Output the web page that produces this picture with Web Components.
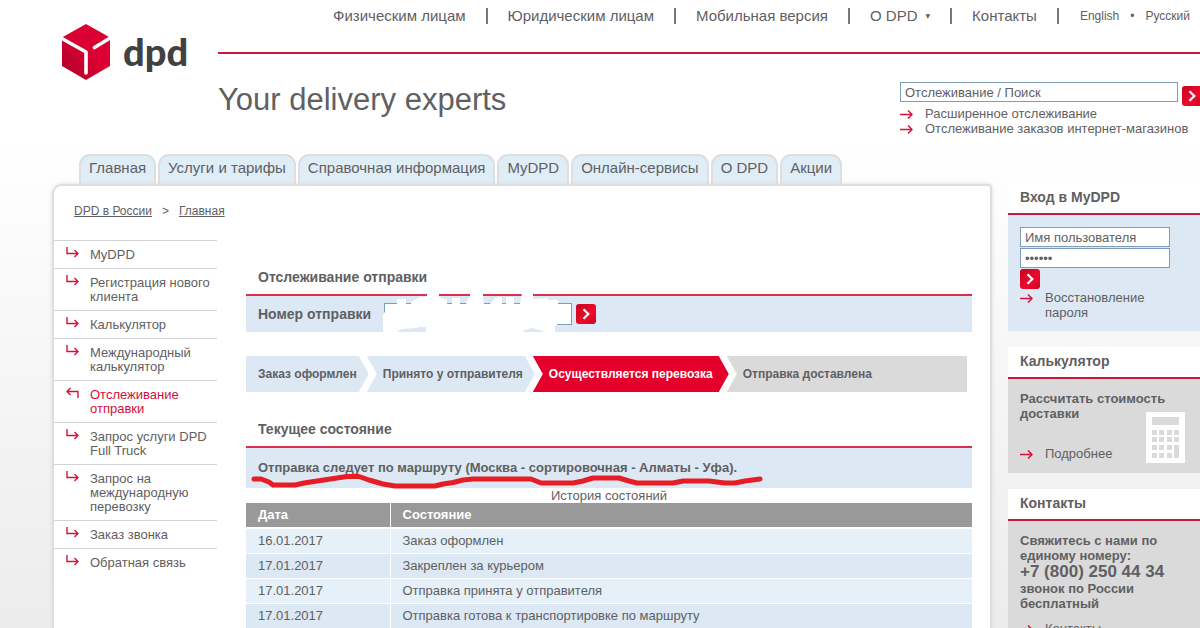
<!DOCTYPE html>
<html lang="ru">
<head>
<meta charset="utf-8">
<meta name="viewport" content="width=device-width, initial-scale=1">
<title>DPD в России</title>
<style>
body { margin: 0; font-family: "Liberation Sans", Arial, sans-serif; font-size: 13px; line-height: 15px; color: #5f6062;
  --red: #c8193c; --blue: #dce8f4; --grey: #dadada; }
</style>
</head>
<body>
<dpd-page></dpd-page>

<script>
const define = (name, html) => {
  const tpl = document.createElement('template');
  tpl.innerHTML = `<style>:host{display:block}*{box-sizing:border-box}a{color:inherit;text-decoration:none}</style>` + html;
  customElements.define(name, class extends HTMLElement {
    constructor() {
      super();
      this.attachShadow({ mode: 'open' }).append(tpl.content.cloneNode(true));
    }
  });
};

/* Red square submit button */
define('dpd-go', `
<style>
:host{flex:none;width:20px;height:20px}
button{display:block;width:20px;height:20px;padding:0;border:0;border-radius:3px;background:linear-gradient(135deg,#c4041f,#ee0a2c 60%,#d00420)}
svg{display:block}
</style>
<button type="button" aria-label="Отправить"><svg width="20" height="20" viewBox="0 0 20 20"><path d="M7.500 5.300 12.300 10 7.500 14.700" fill="none" stroke="#fff" stroke-width="2.200"/></svg></button>`);

/* Link with a thin red arrow */
define('dpd-arrow-link', `
<style>
a{display:flex;gap:12px}
svg{flex:none;margin-top:3px}
</style>
<a href="#"><svg width="13" height="11" viewBox="0 0 13 11"><path d="M0 5.500H12M8 1.500l4 4-4 4" fill="none" stroke="#d0143e" stroke-width="1.500"/></svg><span><slot></slot></span></a>`);

define('dpd-logo', `
<style>
a{display:flex;gap:12px;align-items:center;color:#414042}
span{font:900 38px/44px Lato,sans-serif;padding-bottom:2px}
</style>
<a href="#"><svg width="50" height="58" viewBox="0 0 50 58">
<defs><linearGradient id="g" x1="0" y1="1" x2="1" y2="0"><stop offset="0" stop-color="#a8002c"/><stop offset=".55" stop-color="#dc0032"/><stop offset="1" stop-color="#dc0032"/></linearGradient></defs>
<path d="M25 1 49 14.500V43L25 57 1 43V14.500Z" fill="url(#g)"/>
<path d="M0 15 25 29V50" fill="none" stroke="#fff" stroke-width="3.600" stroke-linejoin="round" stroke-linecap="round"/>
<path d="M50 14.500 33.500 24.500" fill="none" stroke="#fff" stroke-width="3.600" stroke-linecap="round"/>
</svg><span>dpd</span></a>`);

define('dpd-topnav', `
<style>
nav{display:flex;justify-content:flex-end;align-items:center;padding:8px 10px 0 0;font-size:15px;line-height:16px;white-space:nowrap}
nav>a{padding:0 20px;border-right:2px solid #77787a}
nav small{display:flex;gap:11px;padding-left:21px;font-size:12px}
i{font:6px/16px "DejaVu Sans",sans-serif;padding-left:8px;vertical-align:top}
</style>
<nav><a href="#">Физическим лицам</a><a href="#">Юридическим лицам</a><a href="#">Мобильная версия</a><a href="#">О DPD<i>▼</i></a><a href="#">Контакты</a>
<small><a href="#">English</a><span>•</span><a href="#">Русский</a></small></nav>`);

define('dpd-search', `
<style>
:host{width:300px}
form{display:flex;gap:4px;margin:0}
input{flex:none;width:278px;height:20px;border:1px solid #7f9db9;padding:0 4px;font:inherit;color:inherit;background:#fff}
dpd-go{margin-top:4px}
</style>
<form><input type="text" aria-label="Поиск" value="Отслеживание / Поиск"><dpd-go></dpd-go></form>
<dpd-arrow-link>Расширенное отслеживание</dpd-arrow-link>
<dpd-arrow-link>Отслеживание заказов интернет-магазинов</dpd-arrow-link>`);

define('dpd-header', `
<style>
header{display:flex;height:154px;padding-left:61px}
dpd-logo{flex:none;width:157px;padding-top:23px}
.m{flex:1;min-width:0}
.l{margin-top:28px;border-top:2px solid var(--red)}
.r{display:flex;justify-content:space-between;padding-top:28px}
.s{font-size:31px;line-height:36px;white-space:nowrap}
</style>
<header><dpd-logo></dpd-logo><div class="m"><dpd-topnav></dpd-topnav><div class="l"></div>
<div class="r"><div class="s">Your delivery experts</div><dpd-search></dpd-search></div></div></header>`);

define('dpd-tabs', `
<style>
nav{display:flex;gap:2px;padding-left:79px;font-size:15px}
a{padding:4px 8px 8px;line-height:16px;background:#dfedf7;border:2px solid #dcdedf;border-bottom:0;border-radius:11px 11px 0 0;white-space:nowrap}
</style>
<nav><a href="#">Главная</a><a href="#">Услуги и тарифы</a><a href="#">Справочная информация</a><a href="#">MyDPD</a><a href="#">Онлайн-сервисы</a><a href="#">О DPD</a><a href="#">Акции</a></nav>`);

define('dpd-menu-item', `
<style>
:host{border-top:1px solid #d3d4d5}
a{display:flex;gap:11px;padding:7px 0 6px 12px;line-height:14px}
svg{flex:none;margin-top:-2px}
:host([current]) a{color:#d0103a}
:host([current]) svg{transform:rotate(180deg)}
</style>
<a href="#"><svg width="13" height="13" viewBox="0 0 13 13"><path d="M1 1V7.500H12M8.500 4l3.500 3.500L8.500 11" fill="none" stroke="#d0143e" stroke-width="1.400"/></svg><span><slot></slot></span></a>`);

define('dpd-menu', `
<style>:host{flex:none;width:163px}</style>
<nav><dpd-menu-item>MyDPD</dpd-menu-item><dpd-menu-item>Регистрация нового клиента</dpd-menu-item><dpd-menu-item>Калькулятор</dpd-menu-item><dpd-menu-item>Международный калькулятор</dpd-menu-item><dpd-menu-item current>Отслеживание отправки</dpd-menu-item><dpd-menu-item>Запрос услуги DPD Full Truck</dpd-menu-item><dpd-menu-item>Запрос на международную перевозку</dpd-menu-item><dpd-menu-item>Заказ звонка</dpd-menu-item><dpd-menu-item>Обратная связь</dpd-menu-item></nav>`);

/* Titled section with a red rule and a blue band */
define('dpd-section', `
<style>
h2{margin:0;padding:0 12px 9px;font-size:14px;line-height:16px;border-bottom:2px solid #d8304f}
.b{position:relative;background:var(--blue);padding:0 12px}
</style>
<h2><slot name="title"></slot></h2><div class="b"><slot></slot></div>`);

define('dpd-number-form', `
<style>
form{display:flex;align-items:center;gap:4px;height:36px;margin:0}
label{font-weight:700;font-size:14px;padding-right:9px}
input{width:188px;height:22px;border:1px solid #7f9db9;padding:0 4px;font:inherit;background:#fff}
svg{position:absolute;left:137px;top:-4px}
</style>
<form><label for="n">Номер отправки</label><input id="n" type="text"><dpd-go></dpd-go></form>
<svg width="190" height="40" viewBox="0 0 190 40"><path fill="#fff" d="M0 40V23L6 13H14V7H23V12H28V10L37 5H44V1H56V5L64 8V12H69V6H77V12H83L85 6H87V1H100V6L101 12H107L112 6 119 5V12H123V5H131V12H137L139 1H150V7L164 6 165 8H175V32L172 34V40H162L150 36 141 38V40H43V35H36L34 36 18 37 14 40Z"/></svg>`);

define('dpd-steps', `
<style>
ol{display:flex;margin:0;padding:0 5px 0 0;list-style:none;font-size:12px;line-height:36px;font-weight:700;white-space:nowrap}
li{background:var(--blue);padding:0 12px 0 16px;margin-left:-2px;clip-path:polygon(0 0,calc(100% - 10px) 0,100% 50%,calc(100% - 10px) 100%,0 100%,10px 50%)}
li:first-child{margin:0;padding-left:12px;clip-path:polygon(0 0,calc(100% - 10px) 0,100% 50%,calc(100% - 10px) 100%,0 100%)}
li.on{background:#e4002b;color:#fff;padding-right:16px}
li:last-child{flex:1;background:var(--grey);clip-path:polygon(0 0,100% 0,100% 100%,0 100%,10px 50%)}
</style>
<ol><li>Заказ оформлен</li><li>Принято у отправителя</li><li class="on">Осуществляется перевозка</li><li>Отправка доставлена</li></ol>`);

define('dpd-route', `
<style>
p{margin:0;padding:12px 0 13px;font-weight:700}
svg{position:absolute;left:3px;top:24px}
</style>
<p><slot></slot></p>
<svg width="516" height="18" viewBox="0 0 516 18"><path d="M5 7H12L20 10 24 13H46L55 11 88 6 98 4.500H110L120 8 134 12 146 14H186L194 12 204 10.500 214 8 224 7H282L292 11H324L334 9 344 6H370L380 9 388 11H424L434 9H460L476 11H486L496 9 511 7" fill="none" stroke="#e71d25" stroke-width="5" stroke-linecap="round" stroke-linejoin="round"/></svg>`);

define('dpd-history', `
<style>
table{width:100%;border-collapse:collapse;line-height:24px}
caption{line-height:15px}
th{background:#999;color:#fff;text-align:left;border-bottom:2px solid #fff}
th,td{padding:0 12px}
th:first-child,td:first-child{width:144px;border-right:1px solid #fff}
td{background:#e5f0f9;border-bottom:1px solid #fff}
tr:nth-child(even) td{background:var(--blue)}
</style>
<table><caption>История состояний</caption><thead><tr><th>Дата</th><th>Состояние</th></tr></thead>
<tbody><tr><td>16.01.2017</td><td>Заказ оформлен</td></tr><tr><td>17.01.2017</td><td>Закреплен за курьером</td></tr><tr><td>17.01.2017</td><td>Отправка принята у отправителя</td></tr><tr><td>17.01.2017</td><td>Отправка готова к транспортировке по маршруту</td></tr></tbody></table>`);

define('dpd-panel', `
<style>
:host{border:2px solid #dedede;border-radius:10px 4px 0 0;background:#fff;box-shadow:0 0 4px #ddd}
.c{padding:18px 20px 0;font-size:12px;line-height:14px}
.c a{text-decoration:underline}
.c span{padding:0 10px}
.w{display:flex;gap:29px;padding:22px 18px 0 0}
.d{flex:1;min-width:0;padding-top:29px}
dpd-steps{margin:24px 0 29px}
</style>
<div class="c"><a href="#">DPD в России</a><span>&gt;</span><a href="#">Главная</a></div>
<div class="w"><dpd-menu></dpd-menu><div class="d">
<dpd-section><span slot="title">Отслеживание отправки</span><dpd-number-form></dpd-number-form></dpd-section>
<dpd-steps></dpd-steps>
<dpd-section><span slot="title">Текущее состояние</span><dpd-route>Отправка следует по маршруту (Москва - сортировочная - Алматы - Уфа).</dpd-route></dpd-section>
<dpd-history></dpd-history></div></div>`);

define('dpd-box', `
<style>
:host{margin-bottom:16px}
h2{margin:0;padding:6px 12px 8px;font-size:14px;line-height:16px;background:#fff;border-bottom:2px solid var(--red)}
.b{position:relative;padding:12px;background:var(--grey)}
:host([blue]) .b{background:var(--blue);padding-bottom:11px}
</style>
<h2><slot name="title"></slot></h2><div class="b"><slot></slot></div>`);

define('dpd-login', `
<style>
form{display:grid;gap:1px;margin:0}
input{width:150px;height:20px;border:1px solid #7f9db9;padding:0 4px;font:inherit;color:inherit;background:#fff}
dpd-arrow-link{width:140px}
</style>
<form><input type="text" aria-label="Имя пользователя" value="Имя пользователя" autocomplete="off"><input type="password" aria-label="Пароль" value="secret" autocomplete="off"><dpd-go></dpd-go>
<dpd-arrow-link>Восстановление пароля</dpd-arrow-link></form>`);

define('dpd-calc', `
<style>
b{display:block;margin-bottom:25px;width:160px}
svg{position:absolute;left:138px;top:33px}
</style>
<b>Рассчитать стоимость доставки</b><dpd-arrow-link>Подробнее</dpd-arrow-link>
<svg width="39" height="51" viewBox="0 0 39 51"><path fill="#fff" d="M0 0H39V51H0Z"/><path fill="#dadada" d="M6 5H33V13H6ZM6 18H11V23H6ZM13 18H18V23H13ZM21 18H26V23H21ZM28 18H33V23H28ZM6 25H11V30H6ZM13 25H18V30H13ZM21 25H26V30H21ZM28 25H33V30H28ZM6 33H11V38H6ZM13 33H18V38H13ZM21 33H26V38H21ZM28 33H33V46H28ZM6 41H11V46H6ZM13 41H18V46H13ZM21 41H26V46H21Z"/></svg>`);

define('dpd-contacts', `
<style>
b{display:block;width:160px;margin-bottom:10px}
strong{display:block;font-size:17px;line-height:18px;white-space:nowrap}
</style>
<b>Свяжитесь с нами по единому номеру:<strong>+7 (800) 250 44 34</strong>звонок по России бесплатный</b><dpd-arrow-link>Контакты</dpd-arrow-link>`);

define('dpd-page', `
<style>
:host{height:100vh;overflow:hidden;background:linear-gradient(#fff 140px,#ececec)}
main{display:flex;gap:16px;padding-left:52px}
dpd-panel{flex:1;min-width:0;min-height:100vh}
aside{flex:none;width:192px;margin-top:-1px}
</style>
<dpd-header></dpd-header><dpd-tabs></dpd-tabs>
<main><dpd-panel></dpd-panel><aside>
<dpd-box blue><span slot="title">Вход в MyDPD</span><dpd-login></dpd-login></dpd-box>
<dpd-box><span slot="title">Калькулятор</span><dpd-calc></dpd-calc></dpd-box>
<dpd-box><span slot="title">Контакты</span><dpd-contacts></dpd-contacts></dpd-box>
</aside></main>`);
</script>
</body>
</html>
